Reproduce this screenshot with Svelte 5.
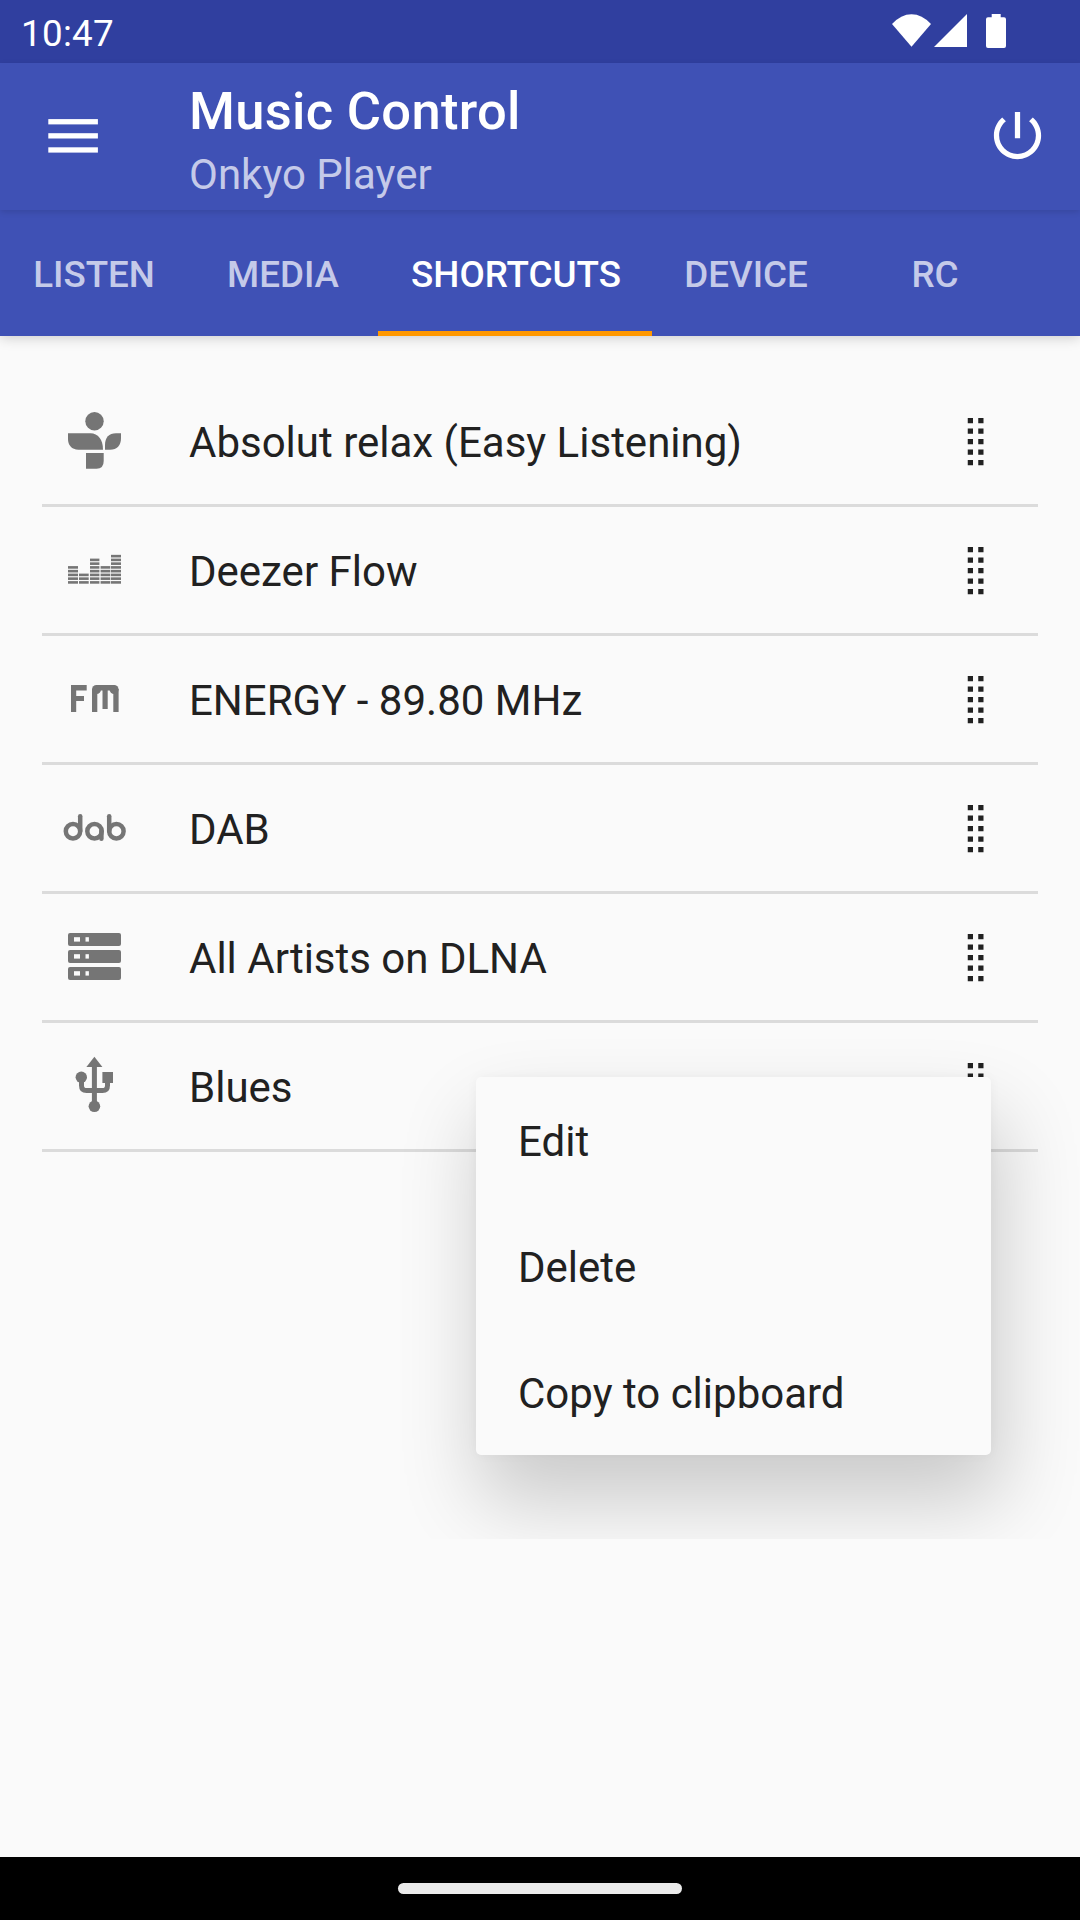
<script>
  const tabs = ['LISTEN', 'MEDIA', 'SHORTCUTS', 'DEVICE', 'RC'];
  const active = 'SHORTCUTS';

  const shortcuts = [
    { icon: 'tunein', label: 'Absolut relax (Easy Listening)' },
    { icon: 'deezer', label: 'Deezer Flow' },
    { icon: 'fm', label: 'ENERGY - 89.80 MHz' },
    { icon: 'dab', label: 'DAB' },
    { icon: 'server', label: 'All Artists on DLNA' },
    { icon: 'usb', label: 'Blues' }
  ];

  const menu = ['Edit', 'Delete', 'Copy to clipboard'];

  // Equalizer columns: left edge, width, number of segments
  const columns = [
    [26, 10, 5],
    [37, 9.7, 3],
    [48, 9.4, 7],
    [58.6, 9.7, 5],
    [69, 10, 8]
  ];
  const segments = columns.flatMap(([x, w, n]) =>
    Array.from({ length: n }, (_, i) => ({ x, w, y: 74.1 - i * 3.75 }))
  );

  const dots = [0, 1, 2, 3, 4].flatMap((r) => [
    { x: 22.75, y: 40 + r * 10.5 },
    { x: 33.25, y: 40 + r * 10.5 }
  ]);
</script>

<div class="screen">
  <div class="status">
    <span class="time">10:47</span>
    <svg class="signals" width="124" height="63" viewBox="0 0 124 63">
      <path d="M8 24Q17 14.2 27.5 14.2T47 24L27.5 46.8Z" />
      <path d="M83 14V47H50Z" />
      <path d="M107.700 14h9v3.300h3.300q2 0 2 2V46q0 2-2 2h-16q-2 0-2-2V19.300q0-2 2-2h3.700z" />
    </svg>
  </div>

  <header class="toolbar">
    <svg class="burger" width="50" height="34" viewBox="0 0 50 34">
      <rect x="0.300" y="0.100" width="49.600" height="5.300" />
      <rect x="0.300" y="14.200" width="49.600" height="5.300" />
      <rect x="0.300" y="28.300" width="49.600" height="5.300" />
    </svg>
    <div class="titles">
      <div class="title">Music Control</div>
      <div class="subtitle">Onkyo Player</div>
    </div>
    <svg class="power" width="63" height="63" viewBox="0 0 24 24">
      <path d="M13 3h-2v10h2V3zm4.830 2.170l-1.420 1.420C17.990 7.860 19 9.810 19 12c0 3.870-3.130 7-7 7s-7-3.130-7-7c0-2.190 1.010-4.140 2.580-5.420L6.170 5.170C4.230 6.820 3 9.260 3 12c0 4.970 4.030 9 9 9s9-4.030 9-9c0-2.740-1.230-5.180-3.170-6.830z" />
    </svg>
  </header>

  <nav class="tabs">
    {#each tabs as tab}
      <div class="tab" class:active={tab === active}>{tab}</div>
    {/each}
  </nav>

  <main class="content">
    {#each shortcuts as item}
      <div class="row">
        <svg class="icon" width="105" height="126" viewBox="0 0 105 126">
          {#if item.icon === 'tunein'}
            <circle cx="52.500" cy="43.300" r="9.200" />
            <path d="M26 55.300H48.500C56 55.300 61 61.500 61 71.700H36.500C29.500 71.700 26 67 26 61Z" />
            <path d="M79 55.300V60C79 67.500 75 71.700 68 71.700H63V67C63 59.500 67 55.300 74 55.300Z" />
            <path d="M44 75H61.700V83Q61.700 90.700 54.500 90.700H44Z" />
          {:else if item.icon === 'deezer'}
            {#each segments as s}
              <rect x={s.x} y={s.y} width={s.w} height="2.600" />
            {/each}
          {:else if item.icon === 'fm'}
            <rect x="29" y="49" width="5.200" height="27" />
            <rect x="29" y="49" width="15.700" height="5.500" />
            <rect x="29" y="60" width="13" height="5" />
            <rect x="50" y="53" width="5.300" height="23" />
            <rect x="71.300" y="53" width="5.300" height="23" />
            <rect x="60.500" y="51" width="5.200" height="22" />
            <rect x="54" y="49" width="18.600" height="5.500" />
            <circle cx="54.500" cy="53.500" r="4.500" />
            <circle cx="72.100" cy="53.500" r="4.500" />
          {:else if item.icon === 'dab'}
            <g class="line thin">
              <circle cx="31" cy="66.300" r="7.200" />
              <line x1="38.200" y1="51.200" x2="38.200" y2="66" />
              <circle cx="52.500" cy="66.300" r="7.200" />
              <line x1="59.400" y1="66" x2="59.400" y2="73.800" />
              <circle cx="74.400" cy="66.300" r="7.200" />
              <line x1="67.200" y1="51.200" x2="67.200" y2="66" />
            </g>
          {:else if item.icon === 'server'}
            {#each [39, 56, 73] as y}
              <rect x="26" {y} width="53" height="13" rx="2" />
              <rect class="hole" x="32" y={y + 4.2} width="6" height="4.400" />
              <rect class="hole" x="43.500" y={y + 4.2} width="3.400" height="4.400" />
            {/each}
          {:else}
            <path d="M52.400 33.700L60.400 44H44.400Z" />
            <circle cx="39.300" cy="54.300" r="5.700" />
            <rect x="60.400" y="49" width="10.600" height="11" />
            <circle cx="52.400" cy="83.300" r="5.800" />
            <path class="line" d="M52.400 42V82M39.500 55V62.500Q39.500 67.600 44.500 67.600H60.500Q65.500 67.600 65.500 62.500V58" />
          {/if}
        </svg>
        <span class="label">{item.label}</span>
        <svg class="handle" width="63" height="126" viewBox="0 0 63 126">
          {#each dots as d}
            <rect x={d.x} y={d.y} width="5.250" height="5.250" />
          {/each}
        </svg>
      </div>
    {/each}
  </main>

  <footer class="navbar"><div class="pill"></div></footer>

  <div class="menu">
    {#each menu as entry}
      <div class="entry">{entry}</div>
    {/each}
  </div>
</div>

<style>
  :global(body) {
    margin: 0;
  }
  .screen {
    position: relative;
    display: flex;
    flex-direction: column;
    width: 1080px;
    height: 1920px;
    overflow: hidden;
    background: #fafafa;
    color: #212121;
    font-family: Roboto, sans-serif;
    font-size: 42px;
    white-space: nowrap;
  }
  .screen * {
    box-sizing: border-box;
  }
  svg {
    display: block;
    flex: none;
  }
  .status {
    display: flex;
    justify-content: space-between;
    height: 63px;
    flex: none;
    padding: 0 72px 0 21px;
    background: #303f9f;
    color: #fff;
    fill: #fff;
  }
  .time {
    padding-top: 4px;
    font-size: 36.75px;
    letter-spacing: 0.3px;
    line-height: 59px;
  }
  .toolbar {
    position: relative;
    z-index: 1;
    display: flex;
    flex: none;
    height: 147px;
    padding: 0 31.5px 0 48px;
    background: #3f51b5;
    color: #fff;
    fill: #fff;
    box-shadow: 0 2px 6px rgba(0, 0, 0, 0.12);
  }
  .burger {
    margin-top: 56px;
  }
  .titles {
    flex: 1;
    padding: 18px 0 0 91px;
  }
  .title {
    font-size: 52.5px;
    font-weight: 500;
    letter-spacing: 0.3px;
    line-height: 60px;
  }
  .subtitle {
    margin-top: 9px;
    color: #c5cae9;
    line-height: 49px;
  }
  .power {
    margin-top: 41px;
  }
  .tabs {
    display: flex;
    flex: none;
    height: 126px;
    background: #3f51b5;
    box-shadow: 0 2px 12px rgba(0, 0, 0, 0.18);
  }
  .tab {
    width: 189px;
    padding: 3px 1px 0 0;
    color: #c5cae9;
    font-size: 36.75px;
    font-weight: 500;
    line-height: 123px;
    text-align: center;
  }
  .tab.active {
    width: 274px;
    padding: 3px 0 0 2px;
    border-bottom: 5px solid #ff9800;
    color: #fff;
  }
  .content {
    flex: 1;
    padding: 42px 42px 0;
  }
  .row {
    display: flex;
    height: 129px;
    border-bottom: 3px solid #dbdbdb;
  }
  .icon {
    fill: #757575;
  }
  .icon .line {
    fill: none;
    stroke: #757575;
    stroke-width: 5;
  }
  .icon .thin {
    stroke-width: 4.5;
    stroke-linecap: round;
  }
  .icon .hole {
    fill: #fafafa;
  }
  .label {
    flex: 1;
    padding: 3px 0 0 42px;
    line-height: 123px;
  }
  .handle {
    margin-right: 30px;
    fill: #212121;
  }
  .navbar {
    display: flex;
    justify-content: center;
    flex: none;
    height: 63px;
    padding-top: 26px;
    background: #000;
  }
  .pill {
    width: 284px;
    height: 11px;
    border-radius: 6px;
    background: #ebebeb;
  }
  .menu {
    position: absolute;
    z-index: 2;
    left: 476px;
    top: 1077px;
    width: 515px;
    height: 378px;
    border-radius: 5px;
    background: #fafafa;
    box-shadow:
      7px 43px 80px 4px rgba(0, 0, 0, 0.19),
      0 0 12px rgba(0, 0, 0, 0.04);
    /* the shadow ends where the popup window does */
    clip-path: inset(-60px -89px -84px -90px);
  }
  .entry {
    height: 126px;
    padding: 3px 42px 0;
    line-height: 123px;
  }
</style>
